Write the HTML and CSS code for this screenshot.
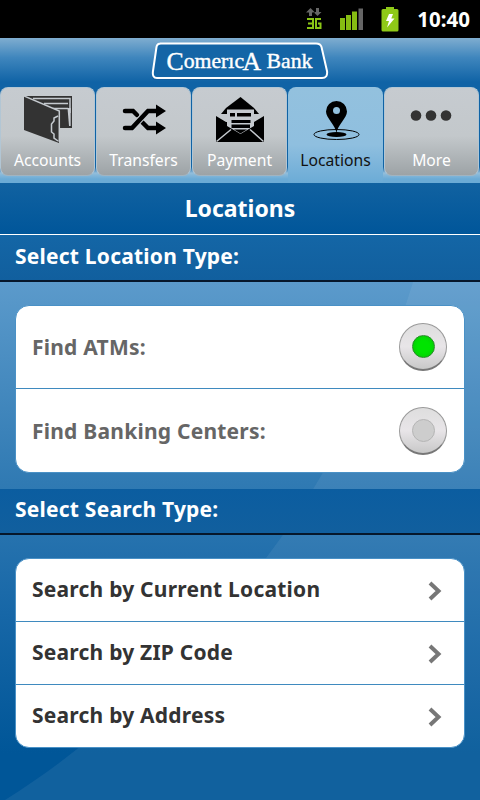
FILE: index.html
```html
<!DOCTYPE html>
<html lang="en">
<head>
    <meta charset="UTF-8">
    <meta name="viewport" content="width=device-width, initial-scale=1.0">
    <title>Locations</title>
    <link rel="stylesheet" href="styles.css">
</head>
<body>
    <div class="status-bar">
        <svg class="network" width="16" height="24" viewBox="0 0 16 24">
            <path d="M4.500 1L0 5.500H3V9H6V5.500H9ZM11.500 9L7.500 5H10V1H13V5H15.500Z" fill="#666"/>
            <path d="M1 12H7V21H1M2 16.500H7M15 12H10V21H14.500V16.500H12" fill="none" stroke="#8bc516" stroke-width="2"/>
        </svg>
        <svg class="signal" width="24" height="22" viewBox="0 0 24 22">
            <path d="M0 10H5V22H0ZM6 7H11V22H6ZM12 3.500H17V22H12Z" fill="#86bd12"/>
            <path d="M18.500 0.500H23V22H18.500Z" fill="#666"/>
        </svg>
        <svg class="battery" width="18" height="25" viewBox="0 0 18 25">
            <path d="M5 0H13V2H16Q17.500 2 17.500 3.500V23Q17.500 24.500 16 24.500H2Q0.500 24.500 0.500 23V3.500Q0.500 2 2 2H5Z" fill="#8fc918"/>
            <path d="M8 7H12L10.300 11.500H13.500L6 20.500L8 14H5Z" fill="#fff"/>
        </svg>
        <span class="time">10:40</span>
    </div>

    <header>
        <svg class="logo" width="180" height="40" viewBox="0 0 180 40">
            <path d="M11 2H167Q171.500 2 172.500 6L178 31Q179 37.500 173 37.500H7Q2 37.500 3 31L7.500 6Q8 2 12 2Z" transform="translate(0 1.500)" fill="#12599a" opacity="0.6"/>
            <path d="M11 2.500H167Q171.500 2.500 172.500 6L178 30Q179 37 173 37H8Q3 37 4 30L7.500 6Q8 2.500 12 2.500Z" fill="#1465a6" stroke="#fff" stroke-width="2"/>
            <text x="17.500" y="26.500" class="wordmark" textLength="146" lengthAdjust="spacingAndGlyphs"><tspan dy="2" class="big">C</tspan><tspan dy="-2">omerıc</tspan><tspan dy="2" dx="-1.500" class="big">A</tspan><tspan dy="-2"> Bank</tspan></text>
        </svg>
    </header>

    <nav class="tabs">
        <a class="tab">
            <svg width="48" height="48" viewBox="0 0 48 48">
                <path d="M0 -1H48V32H36V20L0 3Z" fill="#333"/>
                <path d="M9 2.500H46V17M20 7.500H44M29 12.500H44" fill="none" stroke="#c5cacf" stroke-width="1.500"/>
                <path d="M43.500 12L45 30L46.700 30V12Z" fill="#c5cacf"/>
                <path d="M0 0.500L35 15V47L0 34Z" fill="#333"/>
                <path d="M0 0L35.300 15V46M34 20L30 22V25L27.500 28V36L30 38V42L34 45" fill="none" stroke="#c5cacf" stroke-width="1.500"/>
            </svg>
            <span>Accounts</span>
        </a>
        <a class="tab">
            <svg width="48" height="48" viewBox="0 0 48 48">
                <path d="M5 15H13L17 19M22 26L28 32H36" fill="none" stroke="#000" stroke-width="4.500" stroke-linecap="round"/>
                <path d="M5 32H12L28 15H36" fill="none" stroke="#c5cacf" stroke-width="6.500"/>
                <path d="M5 32H12L28 15H36" fill="none" stroke="#000" stroke-width="4.500" stroke-linecap="round"/>
                <path d="M36 8.500L46 15L36 21.500ZM36 25.500L46 32L36 38.500Z"/>
            </svg>
            <span>Transfers</span>
        </a>
        <a class="tab">
            <svg width="48" height="48" viewBox="0 0 48 48">
                <path d="M24.500 1L38 12L43 18H5L10 12Z"/>
                <path d="M0 20L10 26H38L48 20V46H0Z"/>
                <path d="M11 13.500H38V30L24.500 38L11 30Z" fill="#c5cacf"/>
                <path d="M14 17H19V20.500H14ZM21 17H35V20.500H21ZM15.500 24H34.500V27H15.500ZM15.500 28.500H34V32H15.500ZM18 33.500H31L24.500 37.500Z"/>
                <path d="M0.500 45.500L15 33.500M47.500 45.500L34 33.500" stroke="#c5cacf" stroke-width="1.500"/>
            </svg>
            <span>Payment</span>
        </a>
        <a class="tab active">
            <svg width="48" height="48" viewBox="0 0 48 48">
                <ellipse cx="24.500" cy="38.500" rx="22.500" ry="5" fill="none" stroke="#000"/>
                <ellipse cx="24.500" cy="38.500" rx="10" ry="2.500"/>
                <path d="M24.500 37C23.500 29 14 22 14 15.500A10.500 10.500 0 0 1 35 15.500C35 22 25.500 29 24.500 37Z"/>
                <circle cx="24.500" cy="14.500" r="3.500" fill="#93c1de"/>
            </svg>
            <span>Locations</span>
        </a>
        <a class="tab">
            <svg width="48" height="48" viewBox="0 0 48 48" fill="#333">
                <circle cx="8" cy="19.500" r="5.300"/>
                <circle cx="23" cy="19.500" r="5.300"/>
                <circle cx="38" cy="19.500" r="5.300"/>
            </svg>
            <span>More</span>
        </a>
    </nav>

    <main>
        <svg class="swoosh" width="480" height="617" viewBox="0 183 480 617">
            <path d="M433 183C418 310 372 390 318 481C255 588 140 715 5 800H480V183Z" fill="#fff" fill-opacity="0.065"/>
        </svg>

        <h1>Locations</h1>

        <h2>Select Location Type:</h2>
        <div class="card location-type">
            <label class="row">Find ATMs: <span class="radio on"></span></label>
            <label class="row">Find Banking Centers: <span class="radio"></span></label>
        </div>

        <h2 class="search-title">Select Search Type:</h2>
        <div class="card search-type">
            <a class="row">Search by Current Location
                <svg width="14" height="20" viewBox="0 0 14 20"><path d="M2 2L10.500 10L2 18" class="chevron"/></svg>
            </a>
            <a class="row">Search by ZIP Code
                <svg width="14" height="20" viewBox="0 0 14 20"><path d="M2 2L10.500 10L2 18" class="chevron"/></svg>
            </a>
            <a class="row">Search by Address
                <svg width="14" height="20" viewBox="0 0 14 20"><path d="M2 2L10.500 10L2 18" class="chevron"/></svg>
            </a>
        </div>
    </main>
</body>
</html>
```
FILE: styles.css
```css
* {
    box-sizing: border-box;
}
body {
    margin: 0;
    width: 480px;
    height: 800px;
    overflow: hidden;
    display: flex;
    flex-direction: column;
    font-family: 'Noto Sans', sans-serif;
    background-color: #00579b;
}

.status-bar {
    height: 38px;
    background-color: #000;
    color: #fff;
    display: flex;
    align-items: center;
    justify-content: flex-end;
    padding-right: 10px;
}
.network {
    margin-right: 18px;
}
.signal {
    margin-right: 17px;
}
.battery {
    margin-right: 18px;
}
.time {
    font-size: 20.5px;
    font-weight: 700;
    line-height: 38px;
}

header {
    height: 49px;
    padding: 3px 0 0 149px;
    background: linear-gradient(#7fadd0, #3f86bd 40%, #1063a6 90%);
}
.logo {
    display: block;
}
.wordmark {
    font-family: 'Liberation Serif', serif;
    font-size: 22px;
    fill: #fff;
    stroke: #fff;
    stroke-width: 0.4px;
}
.big {
    font-size: 26px;
}

/* Tabs */
.tabs {
    height: 96px;
    display: flex;
    background: linear-gradient(#1063a5 0, #1063a5 80px, #93bedb 86px, #6babd6 92px);
}
.tab {
    width: 95px;
    margin-right: 1px;
    height: 89px;
    padding-top: 8px;
    display: flex;
    flex-direction: column;
    align-items: center;
    border: 1px solid #b2c6d4;
    border-bottom-color: #a3b4c0;
    border-radius: 8px;
    background: linear-gradient(#c6cbd0, #c3c8cb 55%, #9da3a6);
    color: #fff;
    font-size: 15.7px;
    line-height: 20px;
}
.tab span {
    margin-top: 6px;
}
.tab.active {
    height: 96px;
    color: #111;
    border: none;
    padding-top: 9px;
    border-radius: 8px 8px 0 0;
    background: linear-gradient(#93c1de, #8fbfdf 60%, #6babd6);
}

/* Page content */
main {
    position: relative;
    flex: 1;
    background: linear-gradient(#74aed8 0, #5b9acb 100px, #307ab3 300px, #1767a7 430px, #005698 570px);
}
.swoosh {
    position: absolute;
    top: 0;
    left: 0;
}
h1, h2, .card {
    position: relative;
}
h1 {
    margin: 0;
    height: 52px;
    border-bottom: 1px solid #fff;
    background: linear-gradient(#1162a1, #00569a);
    color: #fff;
    font-size: 23px;
    line-height: 51px;
    text-align: center;
}
h2 {
    margin: 0;
    height: 47px;
    padding-left: 15px;
    border-bottom: 2px solid #06172b;
    background: linear-gradient(#1466a6, #115f9e);
    color: #fff;
    font-size: 21px;
    line-height: 43px;
    letter-spacing: 0.22px;
}
.search-title {
    height: 46px;
    line-height: 41px;
    background: linear-gradient(#0b5da0, #115f9e);
}
.card {
    width: 450px;
    margin: 23px 15px 16px;
    border: 1px solid #4a91c6;
    border-radius: 14px;
    background-color: #fff;
    overflow: hidden;
    font-size: 21px;
    font-weight: 700;
    letter-spacing: 0.22px;
}
.row {
    display: flex;
    align-items: center;
    justify-content: space-between;
    padding: 0 16px;
}
.row + .row {
    border-top: 1px solid #3f8abf;
}
.location-type .row {
    height: 82px;
    padding-right: 17px;
    color: #666;
}
.location-type .row + .row {
    height: 84px;
}
.search-type .row {
    height: 62px;
    padding-right: 22px;
    padding-bottom: 2px;
    color: #333;
}
.search-type .row + .row {
    height: 63px;
}
.search-type svg {
    margin-top: 3px;
}
.radio {
    width: 48px;
    height: 48px;
    border-radius: 50%;
    border: 1px solid #999;
    border-bottom: 2px solid #777;
    background: linear-gradient(#dedede, #e8e5e8 50%, #c8c8c8);
    display: flex;
    align-items: center;
    justify-content: center;
}
.radio::after {
    content: "";
    width: 21px;
    height: 21px;
    border-radius: 50%;
    border: 1px solid #b5b5b5;
    background-color: #cdcdcd;
}
.radio.on::after {
    border-color: #278b27;
    background: radial-gradient(#00e400 40%, #08c408);
}
.chevron {
    fill: none;
    stroke: #777;
    stroke-width: 4;
}
```
